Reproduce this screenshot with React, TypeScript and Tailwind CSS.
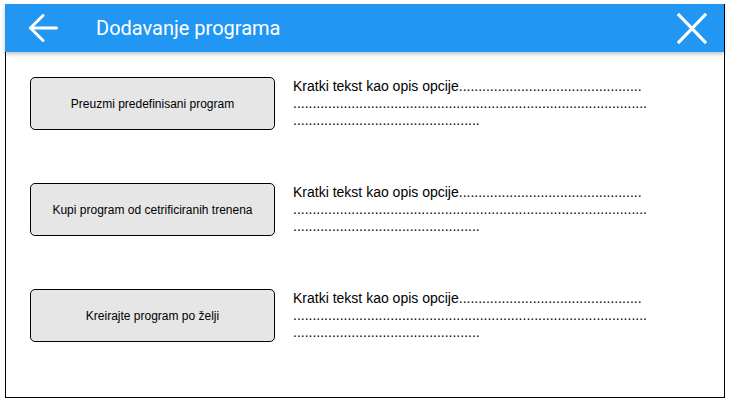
import React from "react";

const options = [
    "Preuzmi predefinisani program",
    "Kupi program od cetrificiranih trenena",
    "Kreirajte program po želji",
];

function BackIcon() {
    return (
        <svg width="30" height="28" viewBox="0 0 30 28" fill="none" stroke="white" strokeWidth="3" strokeLinecap="round" strokeLinejoin="round">
            <path d="M28.5 14H2.5" />
            <path d="M15 1.5L2.5 14L15 26.5" />
        </svg>
    );
}

function CloseIcon() {
    return (
        <svg width="30" height="31" viewBox="0 0 30 31" fill="none" stroke="white" strokeWidth="3.2" strokeLinecap="square">
            <path d="M2 2L28 29" />
            <path d="M28 2L2 29" />
        </svg>
    );
}

export default function App() {
    return (
        <div className="w-[730px] h-[404px] bg-white pt-[4px] pl-[5px]">
            <div className="w-[720px] h-[394px] border-x border-b border-black flex flex-col">
                <div className="-ml-px h-[48px] bg-[#2196f3] flex items-center shadow-[0_2px_4px_rgba(0,0,0,0.25)] relative z-10">
                    <div className="ml-[23px] flex items-center">
                        <BackIcon />
                    </div>
                    <div className="ml-[38px] text-white text-[20px] font-['Roboto',sans-serif] leading-none">
                        Dodavanje programa
                    </div>
                    <div className="ml-auto mr-[17px] flex items-center">
                        <CloseIcon />
                    </div>
                </div>
                <div className="flex flex-col gap-[53px] pt-[25px] pl-[24px]">
                    {options.map((label) => (
                        <div key={label} className="flex items-start gap-[18px]">
                            <button className="w-[245px] h-[53px] shrink-0 rounded-[5px] border border-black bg-[#e6e6e6] text-[12px] text-black font-['Liberation_Sans',Arial,sans-serif]">
                                {label}
                            </button>
                            <div className="pt-px text-[14px] leading-[17px] text-black font-['Liberation_Sans',Arial,sans-serif] whitespace-nowrap">
                                <div>Kratki tekst kao opis opcije...............................................</div>
                                <div>...........................................................................................</div>
                                <div>................................................</div>
                            </div>
                        </div>
                    ))}
                </div>
            </div>
        </div>
    );
}
